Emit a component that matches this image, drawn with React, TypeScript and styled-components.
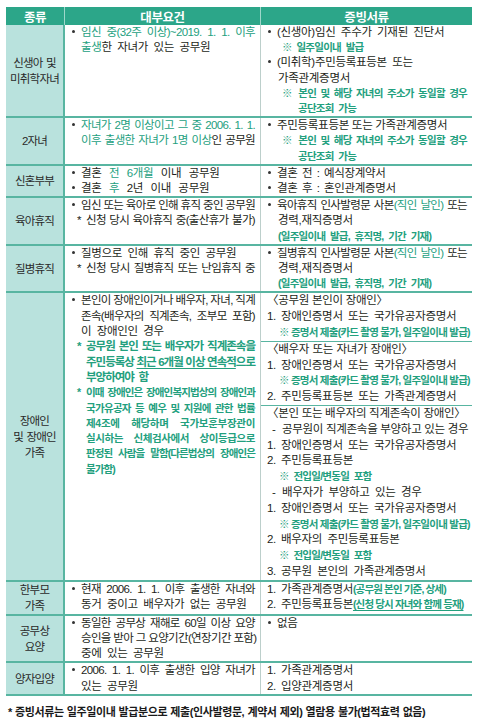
import React from "react";
import styled, { createGlobalStyle, css } from "styled-components";

const GREEN = "#23a07e";
const TEAL = "#58b5a1";
const HEAD = "#2ca689";
const LABEL_BG = "#b9e2dd";
const FONT = `"Liberation Sans", "Noto Sans CJK KR", sans-serif`;

const Global = createGlobalStyle`
  html, body { margin: 0; padding: 0; background: #ffffff; }
  body {
    font-family: ${FONT};
    color: #231f20;
  }
`;

const Page = styled.div`
  padding: 7px 0 0 6px;
  width: 466px;
`;

const Table = styled.div`
  display: flex;
  flex-direction: column;
`;

const HeadRow = styled.div`
  display: grid;
  grid-template-columns: 59px 196px 211px;
  height: 18px;
  background: ${HEAD};
`;

const HeadCell = styled.div<{ $divider?: boolean }>`
  display: flex;
  align-items: center;
  justify-content: center;
  color: #ffffff;
  font-family: "Noto Sans CJK KR", sans-serif;
  font-weight: 700;
  font-size: 12.5px;
  letter-spacing: -0.4px;
  ${(p) =>
    p.$divider &&
    css`
      border-right: 1px solid rgba(255, 255, 255, 0.55);
    `}
`;

const Row = styled.div`
  display: grid;
  grid-template-columns: 59px 196px 211px;
  border-bottom: 2px solid ${TEAL};
`;

const Label = styled.div`
  background: ${LABEL_BG};
  border-right: 2px solid ${TEAL};
  display: flex;
  align-items: center;
  justify-content: center;
  text-align: center;
  font-size: 11.5px;
  letter-spacing: -0.8px;
  word-spacing: 1px;
  line-height: 16px;
  color: #2a2a2a;
`;

const ReqCell = styled.div<{ $lh?: number }>`
  border-right: 1px solid #bccfcb;
  padding: 0 5px 0 6px;
  font-size: 11.5px;
  letter-spacing: -0.65px;
  line-height: ${(p) => p.$lh ?? 15.2}px;
`;

const DocCell = styled.div<{ $lh?: number }>`
  display: flex;
  flex-direction: column;
  font-size: 11.5px;
  letter-spacing: -0.65px;
  line-height: ${(p) => p.$lh ?? 15.2}px;
`;

const Section = styled.div<{ $top?: boolean }>`
  padding: 0 5px 0 6px;
  ${(p) =>
    p.$top &&
    css`
      border-top: 1px solid ${TEAL};
    `}
`;

const Line = styled.div<{ $pad?: number; $just?: boolean; $ws?: number }>`
  padding-left: ${(p) => p.$pad ?? 0}px;
  white-space: nowrap;
  ${(p) =>
    p.$just
      ? css`
          text-align: justify;
          text-align-last: justify;
        `
      : css`
          letter-spacing: -0.3px;
          word-spacing: ${p.$ws ?? 2.5}px;
        `}
`;

const Note = styled(Line)`
  color: ${GREEN};
  font-weight: 700;
  font-size: 10.5px;
  letter-spacing: -0.75px;
`;

const GreenLine = styled(Line)`
  color: ${GREEN};
  font-weight: 700;
  letter-spacing: -1px;
`;

const TightGreenLine = styled(Line)<{ $ls?: number }>`
  color: ${GREEN};
  font-weight: 700;
  font-size: 10.5px;
  letter-spacing: ${(p) => p.$ls ?? -0.9}px;
`;

const Bullet = styled.span`
  display: inline-block;
  width: 10px;
  position: relative;
  height: 1px;
  &::before {
    content: "";
    position: absolute;
    left: 1px;
    top: -5px;
    width: 3px;
    height: 3px;
    border-radius: 50%;
    background: #333333;
  }
`;

const Star = styled.span`
  display: inline-block;
  width: 9px;
  margin-left: 6px;
  text-align: left;
`;

const Num = styled.span`
  display: inline-block;
  width: 14px;
  text-align: left;
`;

const Dash = styled.span`
  display: inline-block;
  width: 10px;
  text-align: left;
`;

const G = styled.span<{ $u?: boolean }>`
  color: ${GREEN};
  ${(p) =>
    p.$u &&
    css`
      text-decoration: underline;
      text-underline-offset: 2px;
    `}
`;

const SmallG = styled.span<{ $u?: boolean }>`
  color: ${GREEN};
  font-weight: 700;
  font-size: 10.5px;
  letter-spacing: -0.85px;
  ${(p) =>
    p.$u &&
    css`
      text-decoration: underline;
      text-underline-offset: 2px;
    `}
`;

const Footnote = styled.div`
  margin-top: 8px;
  padding-left: 2px;
  font-size: 11px;
  font-weight: 700;
  letter-spacing: -0.4px;
  word-spacing: 0.5px;
  line-height: 16px;
  color: #1a1a1a;
  white-space: nowrap;
`;

export default function App() {
  return (
    <>
      <Global />
      <Page>
        <Table>
          <HeadRow>
            <HeadCell $divider>종류</HeadCell>
            <HeadCell $divider>대부요건</HeadCell>
            <HeadCell>증빙서류</HeadCell>
          </HeadRow>

          {/* 신생아 및 미취학자녀 */}
          <Row>
            <Label>
              신생아 및
              <br />
              미취학자녀
            </Label>
            <ReqCell>
              <Line $just>
                <Bullet />
                <G>임신 중(32주 이상)~2019. 1. 1. 이후</G>
              </Line>
              <Line $pad={10}>
                <G>출생</G>한 자녀가 있는 공무원
              </Line>
            </ReqCell>
            <DocCell>
              <Section>
                <Line>
                  <Bullet />
                  (신생아)임신 주수가 기재된 진단서
                </Line>
                <Note $pad={15}>※ 일주일이내 발급</Note>
                <Line>
                  <Bullet />
                  (미취학)주민등록표등본 또는
                </Line>
                <Line $pad={11}>가족관계증명서</Line>
                <Note $pad={15} $just>
                  ※ 본인 및 해당 자녀의 주소가 동일할 경우
                </Note>
                <Note $pad={31}>공단조회 가능</Note>
              </Section>
            </DocCell>
          </Row>

          {/* 2자녀 */}
          <Row>
            <Label>2자녀</Label>
            <ReqCell>
              <Line $just>
                <Bullet />
                <G>자녀가 2명 이상이고 그 중 2006. 1. 1.</G>
              </Line>
              <Line $pad={10} $just>
                <G>이후 출생한 자녀가 1명 이상</G>인 공무원
              </Line>
            </ReqCell>
            <DocCell>
              <Section>
                <Line $ws={0}>
                  <Bullet />
                  주민등록표등본 또는 가족관계증명서
                </Line>
                <Note $pad={15} $just>
                  ※ 본인 및 해당 자녀의 주소가 동일할 경우
                </Note>
                <Note $pad={31}>공단조회 가능</Note>
              </Section>
            </DocCell>
          </Row>

          {/* 신혼부부 */}
          <Row>
            <Label>신혼부부</Label>
            <ReqCell>
              <Line $ws={4.5}>
                <Bullet />
                결혼 <G>전 6개월</G> 이내 공무원
              </Line>
              <Line $ws={4.5}>
                <Bullet />
                결혼 <G>후</G> 2년 이내 공무원
              </Line>
            </ReqCell>
            <DocCell>
              <Section>
                <Line $ws={1.5}>
                  <Bullet />
                  결혼 전 : 예식장계약서
                </Line>
                <Line $ws={1.5}>
                  <Bullet />
                  결혼 후 : 혼인관계증명서
                </Line>
              </Section>
            </DocCell>
          </Row>

          {/* 육아휴직 */}
          <Row>
            <Label>육아휴직</Label>
            <ReqCell>
              <Line $just>
                <Bullet />
                임신 또는 육아로 인해 휴직 중인 공무원
              </Line>
              <Line $just>
                <Star>*</Star>신청 당시 육아휴직 중(출산휴가 불가)
              </Line>
            </ReqCell>
            <DocCell>
              <Section>
                <Line $just>
                  <Bullet />
                  육아휴직 인사발령문 사본<G>(직인 날인)</G> 또는
                </Line>
                <Line $pad={11}>경력,재직증명서</Line>
                <Note $pad={11}>(일주일이내 발급, 휴직명, 기간 기재)</Note>
              </Section>
            </DocCell>
          </Row>

          {/* 질병휴직 */}
          <Row>
            <Label>질병휴직</Label>
            <ReqCell>
              <Line>
                <Bullet />
                질병으로 인해 휴직 중인 공무원
              </Line>
              <Line $just>
                <Star>*</Star>신청 당시 질병휴직 또는 난임휴직 중
              </Line>
            </ReqCell>
            <DocCell>
              <Section>
                <Line $just>
                  <Bullet />
                  질병휴직 인사발령문 사본<G>(직인 날인)</G> 또는
                </Line>
                <Line $pad={11}>경력,재직증명서</Line>
                <Note $pad={11}>(일주일이내 발급, 휴직명, 기간 기재)</Note>
              </Section>
            </DocCell>
          </Row>

          {/* 장애인 및 장애인 가족 */}
          <Row>
            <Label>
              장애인
              <br />및 장애인
              <br />
              가족
            </Label>
            <ReqCell $lh={15.3}>
              <Line $just>
                <Bullet />
                본인이 장애인이거나 배우자, 자녀, 직계
              </Line>
              <Line $pad={10} $just>
                존속(배우자의 직계존속, 조부모 포함)
              </Line>
              <Line $pad={10}>이 장애인인 경우</Line>
              <GreenLine $just>
                <Star>*</Star>공무원 본인 또는 배우자가 직계존속을
              </GreenLine>
              <GreenLine $pad={15} $just>
                주민등록상 <G $u>최근 6개월 이상 연속적</G>으로
              </GreenLine>
              <GreenLine $pad={15}>부양하여야 함</GreenLine>
              <TightGreenLine $just>
                <Star>*</Star>이때 장애인은 장애인복지법상의 장애인과
              </TightGreenLine>
              <TightGreenLine $pad={15} $just $ls={-0.7}>
                국가유공자 등 예우 및 지원에 관한 법률
              </TightGreenLine>
              <TightGreenLine $pad={15} $just $ls={-0.3}>
                제4조에 해당하며 국가보훈부장관이
              </TightGreenLine>
              <TightGreenLine $pad={15} $just $ls={-0.4}>
                실시하는 신체검사에서 상이등급으로
              </TightGreenLine>
              <TightGreenLine $pad={15} $just>
                판정된 사람을 말함(다른법상의 장애인은
              </TightGreenLine>
              <TightGreenLine $pad={15}>불가함)</TightGreenLine>
            </ReqCell>
            <DocCell $lh={15.8}>
              <Section>
                <Line $ws={0}>〈공무원 본인이 장애인〉</Line>
                <Line>
                  <Num>1.</Num>장애인증명서 또는 국가유공자증명서
                </Line>
                <Note $pad={12} $just>
                  ※ 증명서 제출(카드 촬영 불가, 일주일이내 발급)
                </Note>
              </Section>
              <Section $top>
                <Line $ws={0.5}>〈배우자 또는 자녀가 장애인〉</Line>
                <Line>
                  <Num>1.</Num>장애인증명서 또는 국가유공자증명서
                </Line>
                <Note $pad={12} $just>
                  ※ 증명서 제출(카드 촬영 불가, 일주일이내 발급)
                </Note>
                <Line>
                  <Num>2.</Num>주민등록표등본 또는 가족관계증명서
                </Line>
              </Section>
              <Section $top>
                <Line $ws={0}>〈본인 또는 배우자의 직계존속이 장애인〉</Line>
                <Line $pad={5} $ws={0}>
                  <Dash>-</Dash>공무원이 직계존속을 부양하고 있는 경우
                </Line>
                <Line>
                  <Num>1.</Num>장애인증명서 또는 국가유공자증명서
                </Line>
                <Line>
                  <Num>2.</Num>주민등록표등본
                </Line>
                <Note $pad={12}>※ 전입일/변동일 포함</Note>
                <Line $pad={5}>
                  <Dash>-</Dash>배우자가 부양하고 있는 경우
                </Line>
                <Line>
                  <Num>1.</Num>장애인증명서 또는 국가유공자증명서
                </Line>
                <Note $pad={12} $just>
                  ※ 증명서 제출(카드 촬영 불가, 일주일이내 발급)
                </Note>
                <Line>
                  <Num>2.</Num>배우자의 주민등록표등본
                </Line>
                <Note $pad={12}>※ 전입일/변동일 포함</Note>
                <Line>
                  <Num>3.</Num>공무원 본인의 가족관계증명서
                </Line>
              </Section>
            </DocCell>
          </Row>

          {/* 한부모 가족 */}
          <Row>
            <Label>
              한부모
              <br />
              가족
            </Label>
            <ReqCell>
              <Line $just>
                <Bullet />
                현재 2006. 1. 1. 이후 출생한 자녀와
              </Line>
              <Line $pad={10}>동거 중이고 배우자가 없는 공무원</Line>
            </ReqCell>
            <DocCell>
              <Section>
                <Line $ws={0}>
                  <Num>1.</Num>가족관계증명서
                  <SmallG>(공무원 본인 기준, 상세)</SmallG>
                </Line>
                <Line $ws={0}>
                  <Num>2.</Num>주민등록표등본
                  <SmallG $u>(신청 당시 자녀와 함께 등재)</SmallG>
                </Line>
              </Section>
            </DocCell>
          </Row>

          {/* 공무상 요양 */}
          <Row>
            <Label>
              공무상
              <br />
              요양
            </Label>
            <ReqCell>
              <Line $just>
                <Bullet />
                동일한 공무상 재해로 60일 이상 요양
              </Line>
              <Line $pad={10} $just>
                승인을 받아 그 요양기간(연장기간 포함)
              </Line>
              <Line $pad={10}>중에 있는 공무원</Line>
            </ReqCell>
            <DocCell>
              <Section>
                <Line>
                  <Bullet />
                  없음
                </Line>
              </Section>
            </DocCell>
          </Row>

          {/* 양자입양 */}
          <Row>
            <Label>양자입양</Label>
            <ReqCell>
              <Line $just>
                <Bullet />
                2006. 1. 1. 이후 출생한 입양 자녀가
              </Line>
              <Line $pad={10}>있는 공무원</Line>
            </ReqCell>
            <DocCell>
              <Section>
                <Line>
                  <Num>1.</Num>가족관계증명서
                </Line>
                <Line>
                  <Num>2.</Num>입양관계증명서
                </Line>
              </Section>
            </DocCell>
          </Row>
        </Table>
        <Footnote>
          * 증빙서류는 일주일이내 발급분으로 제출(인사발령문, 계약서 제외) 열람용 불가(법적효력 없음)
        </Footnote>
      </Page>
    </>
  );
}
